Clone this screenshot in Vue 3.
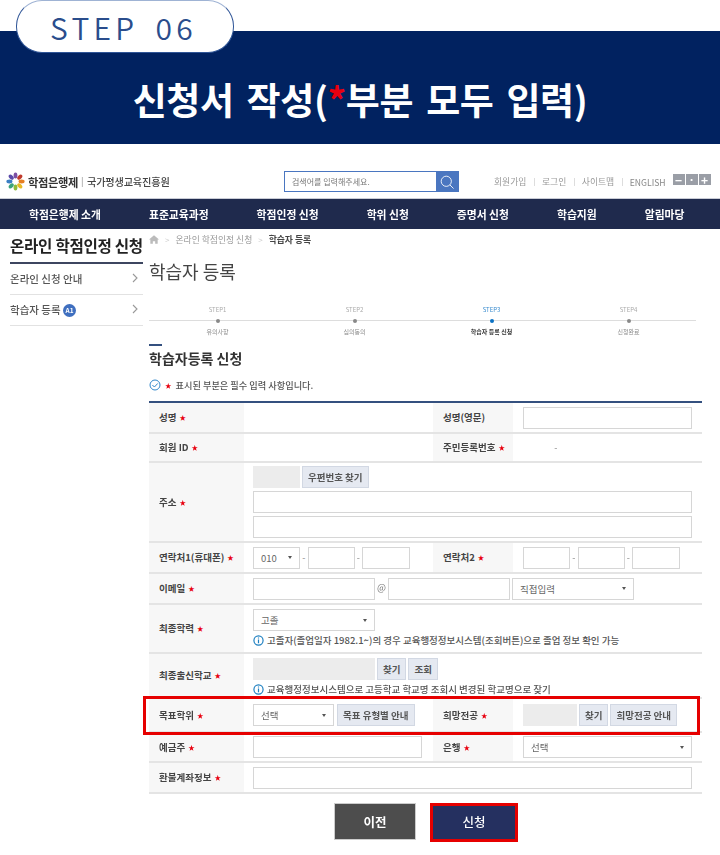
<script setup>
const navItems = ['학점은행제 소개', '표준교육과정', '학점인정 신청', '학위 신청', '증명서 신청', '학습지원', '알림마당']
const steps = [
  { no: 'STEP1', label: '유의사항' },
  { no: 'STEP2', label: '심의동의' },
  { no: 'STEP3', label: '학습자 등록 신청', on: true },
  { no: 'STEP4', label: '신청완료' },
]
const petals = [
  ['#7b4fa3', 0], ['#c0392b', 45], ['#e67e22', 90], ['#e8b923', 135],
  ['#8dbb3a', 180], ['#3aa37a', 225], ['#3b7fc4', 270], ['#5b4aa8', 315],
]
</script>

<template>
  <div class="page">
    <section class="banner">
      <div class="pill">STEP 06</div>
      <h1 class="banner-title">신청서 작성(<span class="red">*</span>부분 모두 입력)</h1>
    </section>

    <section class="shot">
      <header class="top">
        <svg class="logo" viewBox="0 0 20 20" width="19" height="19">
          <g v-for="p in petals" :key="p[1]" :transform="`rotate(${p[1]} 10 10)`">
            <ellipse cx="10" cy="3.6" rx="2" ry="3.2" :fill="p[0]" />
          </g>
        </svg>
        <b class="brand">학점은행제</b>
        <span class="brand-sep">|</span>
        <span class="brand-sub">국가평생교육진흥원</span>
        <div class="search">
          <span class="search-text">검색어를 입력해주세요.</span>
          <span class="search-btn">
            <svg viewBox="0 0 22 22" width="16" height="16" fill="none" stroke="#fff" stroke-width="1.2">
              <circle cx="10" cy="10" r="7" />
              <path d="M15 15l5 5" />
            </svg>
          </span>
        </div>
        <nav class="util">
          <span>회원가입</span><i></i><span>로그인</span><i></i><span>사이트맵</span><i></i><span class="eng">ENGLISH</span>
        </nav>
        <div class="zoomers">
          <span>−</span><span class="mid">•</span><span>+</span>
        </div>
      </header>

      <nav class="gnb">
        <span v-for="n in navItems" :key="n">{{ n }}</span>
      </nav>

      <div class="body">
        <aside class="side">
          <h2 class="side-title">온라인 학점인정 신청</h2>
          <div class="side-item">
            <span>온라인 신청 안내</span>
            <svg class="chev" viewBox="0 0 6 10" width="6" height="10"><path d="M1 1l4 4-4 4" fill="none" stroke="#999" stroke-width="1.1" /></svg>
          </div>
          <div class="side-item">
            <span>학습자 등록 <em class="badge">A1</em></span>
            <svg class="chev" viewBox="0 0 6 10" width="6" height="10"><path d="M1 1l4 4-4 4" fill="none" stroke="#999" stroke-width="1.1" /></svg>
          </div>
        </aside>

        <main class="main">
          <div class="crumbs">
            <svg viewBox="0 0 12 10" width="10" height="9"><path d="M6 0L0 5h1.6v5h3V7h2.8v3h3V5H12z" fill="#bbb" /></svg>
            <span class="gt">&gt;</span>
            <span>온라인 학점인정 신청</span>
            <span class="gt">&gt;</span>
            <b>학습자 등록</b>
          </div>
          <h2 class="page-title">학습자 등록</h2>

          <div class="stepper">
            <div v-for="s in steps" :key="s.no" class="step" :class="{ on: s.on }">
              <span class="step-no">{{ s.no }}</span>
              <span class="dot"></span>
              <span class="step-label">{{ s.label }}</span>
            </div>
          </div>

          <div class="h-bar"></div>
          <h3 class="sec-title">학습자등록 신청</h3>
          <p class="req">
            <svg viewBox="0 0 12 12" width="12" height="12" fill="none" stroke="#2f86c9" stroke-width="1">
              <circle cx="6" cy="6" r="5" /><path d="M3.4 6l2 2 3.4-3.6" />
            </svg>
            <span class="red star">★</span>
            <span>표시된 부분은 필수 입력 사항입니다.</span>
          </p>

          <div class="form">
            <div class="th">성명 <span class="red star">★</span></div>
            <div class="td"></div>
            <div class="th">성명(영문)</div>
            <div class="td2"><input class="f w169" /></div>

            <div class="th">회원 ID <span class="red star">★</span></div>
            <div class="td"></div>
            <div class="th">주민등록번호 <span class="red star">★</span></div>
            <div class="td2 dash-only"><span class="dash">-</span></div>

            <div class="th">주소 <span class="red star">★</span></div>
            <div class="td wide stack">
              <div class="line">
                <span class="ro w47"></span>
                <span class="btn">우편번호 찾기</span>
              </div>
              <input class="f full" />
              <input class="f full" />
            </div>

            <div class="th">연락처1(휴대폰) <span class="red star">★</span></div>
            <div class="td line">
              <div class="sel w47"><span>010</span><i class="caret"></i></div>
              <span class="dash">-</span><input class="f w47" />
              <span class="dash">-</span><input class="f w48" />
            </div>
            <div class="th">연락처2 <span class="red star">★</span></div>
            <div class="td2 line">
              <input class="f w47" /><span class="dash">-</span><input class="f w47" /><span class="dash">-</span><input class="f w48" />
            </div>

            <div class="th">이메일 <span class="red star">★</span></div>
            <div class="td wide line">
              <input class="f w122" />
              <span class="at">@</span>
              <input class="f w122" />
              <div class="sel w122"><span>직접입력</span><i class="caret"></i></div>
            </div>

            <div class="th">최종학력 <span class="red star">★</span></div>
            <div class="td wide stack tight">
              <div class="sel w122"><span>고졸</span><i class="caret"></i></div>
              <p class="info">
                <svg viewBox="0 0 12 12" width="11" height="11" fill="none" stroke="#1c7fc0" stroke-width="1.3">
                  <circle cx="6" cy="6" r="5" /><path d="M6 5v4M6 2.6v1.3" />
                </svg>
                고졸자(졸업일자 1982.1~)의 경우 교육행정정보시스템(조회버튼)으로 졸업 정보 확인 가능
              </p>
            </div>

            <div class="th">최종출신학교 <span class="red star">★</span></div>
            <div class="td wide stack tight">
              <div class="line">
                <span class="ro w122"></span>
                <span class="btn">찾기</span>
                <span class="btn">조회</span>
              </div>
              <p class="info">
                <svg viewBox="0 0 12 12" width="11" height="11" fill="none" stroke="#1c7fc0" stroke-width="1.3">
                  <circle cx="6" cy="6" r="5" /><path d="M6 5v4M6 2.6v1.3" />
                </svg>
                교육행정정보시스템으로 고등학교 학교명 조회시 변경된 학교명으로 찾기
              </p>
            </div>

            <div class="th">목표학위 <span class="red star">★</span></div>
            <div class="td line gap3">
              <div class="sel w81"><span>선택</span><i class="caret"></i></div>
              <span class="btn">목표 유형별 안내</span>
            </div>
            <div class="th">희망전공 <span class="red star">★</span></div>
            <div class="td2 line">
              <span class="ro w54"></span>
              <span class="btn">찾기</span>
              <span class="btn">희망전공 안내</span>
            </div>

            <div class="th">예금주 <span class="red star">★</span></div>
            <div class="td"><input class="f w169" /></div>
            <div class="th">은행 <span class="red star">★</span></div>
            <div class="td2"><div class="sel w169"><span>선택</span><i class="caret"></i></div></div>

            <div class="th">환불계좌정보 <span class="red star">★</span></div>
            <div class="td wide"><input class="f full" /></div>

            <div class="highlight"></div>
          </div>

          <div class="actions">
            <span class="act prev">이전</span>
            <span class="act apply">신청</span>
          </div>
        </main>
      </div>
    </section>
  </div>
</template>

<style>
html, body { margin: 0; background: #fff; }
</style>

<style scoped>
.page {
  width: 720px;
  height: 855px;
  overflow: hidden;
  position: relative;
  background: #fff;
  font-family: "Noto Sans CJK KR", "Noto Sans", sans-serif;
  color: #444;
}
.red { color: #e8000f; }

/* banner */
.banner {
  position: relative;
  margin-top: 31px;
  height: 113px;
  background: #012260;
  display: flex;
  justify-content: center;
  padding-top: 43px;
  box-sizing: border-box;
}
.pill {
  position: absolute;
  left: 16px;
  top: -31px;
  width: 218px;
  height: 53px;
  box-sizing: border-box;
  background: #fff;
  border: 1px solid #2f5597;
  border-top-color: #9fb3d4;
  border-radius: 26px;
  color: #2a4d8c;
  font-size: 30px;
  font-weight: 350;
  letter-spacing: 4.3px;
  word-spacing: 6px;
  line-height: 53px;
  text-align: center;
  padding-right: 3px;
}
.banner-title {
  margin: 0;
  color: #fff;
  font-size: 37px;
  font-weight: 700;
  line-height: 50px;
  letter-spacing: -0.4px;
  word-spacing: 5px;
  white-space: nowrap;
}

/* captured page */
.shot {
  margin-top: 21px;
  filter: blur(0.45px);
}
.top {
  height: 33px;
  display: flex;
  align-items: center;
  padding-left: 6px;
  box-sizing: border-box;
}
.logo { flex: none; margin-right: 3px; }
.brand { font-size: 11.3px; color: #333; white-space: nowrap; letter-spacing: -0.4px; width: 49px; flex: none; }
.brand-sep { font-size: 9px; color: #888; margin: 0 4px; width: 2px; flex: none; }
.brand-sub { font-size: 10.2px; font-weight: 500; color: #444; white-space: nowrap; letter-spacing: -0.2px; width: 85px; flex: none; }
.search {
  margin-left: 112px;
  width: 175px;
  height: 21px;
  flex: none;
  box-sizing: border-box;
  border: 1px solid #4a76c0;
  display: flex;
  align-items: stretch;
}
.search-text { flex: 1; font-size: 8px; color: #777; line-height: 19px; padding-left: 7px; white-space: nowrap; }
.search-btn { width: 22px; background: #4a76c0; display: flex; align-items: center; justify-content: center; }
.util {
  margin-left: 35px;
  display: flex;
  align-items: center;
  gap: 7.3px;
  font-size: 8.8px;
  color: #999;
  white-space: nowrap;
}
.util i { width: 1px; height: 8px; background: #ddd; }
.util .eng { font-size: 8.6px; color: #888; }
.zoomers { margin-left: 7px; display: flex; gap: 1px; margin-bottom: 4px; }
.zoomers span {
  width: 12px;
  height: 11px;
  background: #9a9ea6;
  color: #fff;
  font-size: 12px;
  font-weight: 700;
  line-height: 11px;
  text-align: center;
}
.zoomers .mid { font-size: 7px; }

.gnb {
  height: 31px;
  background: #1f2a4d;
  border-top: 1px solid #c9ccd6;
  box-sizing: border-box;
  display: flex;
  align-items: center;
  gap: 48px;
  padding-left: 29px;
  color: #fff;
  font-size: 10.8px;
  font-weight: 700;
  white-space: nowrap;
}

.body { display: flex; padding-left: 10px; gap: 6px; }
.side { width: 133px; flex: none; }
.side-title {
  margin: 0;
  height: 35px;
  box-sizing: border-box;
  border-bottom: 2px solid #3d4660;
  font-size: 15.6px;
  font-weight: 700;
  color: #222;
  line-height: 33px;
  white-space: nowrap;
  letter-spacing: -0.3px;
}
.side-item {
  height: 31px;
  box-sizing: border-box;
  border-bottom: 1px solid #e2e2e2;
  display: flex;
  align-items: center;
  justify-content: space-between;
  font-size: 10.5px;
  font-weight: 500;
  color: #555;
  padding-right: 5px;
  padding-bottom: 2px;
  white-space: nowrap;
}
.badge {
  display: inline-block;
  width: 13px;
  height: 13px;
  border-radius: 50%;
  background: #3f6fbf;
  color: #fff;
  font-size: 6.5px;
  font-weight: 700;
  font-style: normal;
  line-height: 13px;
  text-align: center;
  vertical-align: 1px;
}

.main { width: 553px; flex: none; }
.crumbs {
  height: 20px;
  display: flex;
  align-items: center;
  gap: 6px;
  font-size: 8.8px;
  color: #999;
  white-space: nowrap;
}
.crumbs b { color: #444; font-weight: 700; }
.crumbs .gt { color: #ccc; font-size: 8px; }
.page-title {
  margin: 0;
  height: 55px;
  padding-top: 2px;
  box-sizing: border-box;
  font-size: 18px;
  font-weight: 400;
  color: #444;
  line-height: 40px;
  white-space: nowrap;
}

.stepper {
  position: relative;
  display: grid;
  grid-template-columns: repeat(4, 137px);
  height: 39px;
}
.stepper::before {
  content: "";
  position: absolute;
  left: 0;
  top: 16px;
  width: 547px;
  height: 1px;
  background: #ddd;
}
.step { position: relative; display: flex; flex-direction: column; align-items: center; }
.step-no { font-size: 6px; line-height: 11px; color: #aaa; height: 14.5px; }
.dot { width: 4px; height: 4px; border-radius: 50%; background: #888; }
.step-label { font-size: 6px; line-height: 9px; color: #888; margin-top: 4.5px; white-space: nowrap; }
.step.on .step-no { color: #3a8ccf; }
.step.on .dot { background: #0b72c4; }
.step.on .step-label { color: #333; font-weight: 700; }

.h-bar { width: 13px; height: 2px; background: #34507f; margin-top: 1px; }
.sec-title {
  margin: 0;
  font-size: 14px;
  font-weight: 700;
  color: #333;
  line-height: 25px;
  height: 27px;
  white-space: nowrap;
}
.req {
  margin: 0;
  height: 28px;
  padding-bottom: 5px;
  box-sizing: border-box;
  display: flex;
  align-items: center;
  gap: 4px;
  font-size: 9.2px;
  font-weight: 500;
  color: #555;
  white-space: nowrap;
}
.star { font-size: 6.5px; vertical-align: 1px; }

.form {
  position: relative;
  border-top: 2px solid #34507f;
  display: grid;
  grid-template-columns: 95px 189px 80px 189px;
  grid-template-rows: 31px 29px 80px 31px 31px 49px 45px 34px 30px 31px;
}
.th, .td, .td2 {
  border-bottom: 2px solid #e4e4e4;
  box-sizing: border-box;
  display: flex;
  align-items: center;
  min-width: 0;
}
.th {
  background: #f7f7f7;
  padding-left: 10px;
  padding-bottom: 1px;
  gap: 3px;
  font-size: 9.5px;
  font-weight: 700;
  color: #444;
  white-space: nowrap;
}
.td { padding-left: 9px; background: #fff; }
.td2 { padding-left: 10px; background: #fff; }
.wide { grid-column: span 3; }
.stack { flex-direction: column; align-items: flex-start; justify-content: center; gap: 3px; }
.stack.tight { justify-content: flex-start; padding-top: 4px; gap: 2px; }
.line { display: flex; align-items: center; gap: 2px; }
.gap3 { gap: 3px; }
.f, .sel, .ro {
  height: 22px;
  box-sizing: border-box;
  flex: none;
  display: block;
}
.f {
  border: 1px solid #d6d6d6;
  background: #fff;
  padding: 0;
  margin: 0;
  outline: none;
}
.ro { background: #ececec; }
.full { width: 439px; }
.w47 { width: 47px; }
.w48 { width: 48px; }
.w54 { width: 54px; }
.w81 { width: 81px; }
.w122 { width: 122px; }
.w169 { width: 169px; }
.sel {
  border: 1px solid #d6d6d6;
  background: #fff;
  display: flex;
  align-items: center;
  justify-content: space-between;
  padding: 0 7px;
  font-size: 9.5px;
  color: #666;
}
.caret {
  width: 0;
  height: 0;
  border-left: 2.5px solid transparent;
  border-right: 2.5px solid transparent;
  border-top: 3px solid #555;
}
.dash { font-size: 9px; color: #888; width: 3.5px; text-align: center; }
.dash-only { padding-left: 41px; }
.at { font-size: 9.5px; color: #777; width: 9px; text-align: center; margin: 0 0 3px; }
.btn {
  height: 22px;
  box-sizing: border-box;
  padding: 0 5px;
  background: #e5e9f1;
  border: 1px solid #d2d8e3;
  font-size: 9.5px;
  font-weight: 700;
  color: #555;
  line-height: 20px;
  white-space: nowrap;
  flex: none;
}
.info {
  margin: 0;
  display: flex;
  align-items: center;
  gap: 3px;
  font-size: 9.5px;
  font-weight: 500;
  color: #555;
  white-space: nowrap;
}
.highlight {
  position: absolute;
  left: -6px;
  top: 293px;
  width: 557px;
  height: 39px;
  box-sizing: border-box;
  border: 3px solid #e60000;
  pointer-events: none;
}

.actions {
  display: flex;
  margin-top: 9px;
  margin-left: 185px;
  gap: 14px;
  align-items: flex-start;
}
.act {
  color: #fff;
  font-size: 12.5px;
  font-weight: 700;
  text-align: center;
  box-sizing: border-box;
}
.prev { width: 82px; height: 37px; line-height: 35px; background: #4d4d4d; border: 1px solid #ccc; }
.apply { width: 88px; height: 39px; line-height: 31px; background: #253060; border: 3px solid #e60000; font-weight: 500; }
</style>
